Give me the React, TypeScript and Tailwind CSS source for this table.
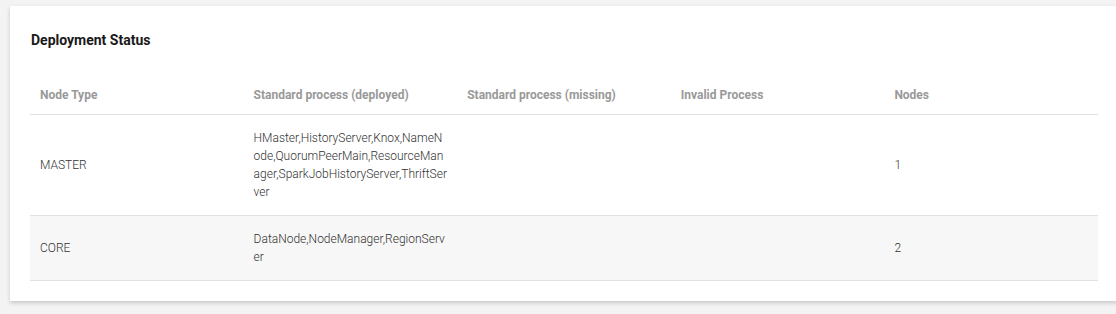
import React from "react";

type NodeRow = {
  type: string;
  deployed: string;
  missing: string;
  invalid: string;
  nodes: number;
};

const rows: NodeRow[] = [
  {
    type: "MASTER",
    deployed:
      "HMaster,HistoryServer,Knox,NameNode,QuorumPeerMain,ResourceManager,SparkJobHistoryServer,ThriftServer",
    missing: "",
    invalid: "",
    nodes: 1,
  },
  {
    type: "CORE",
    deployed: "DataNode,NodeManager,RegionServer",
    missing: "",
    invalid: "",
    nodes: 2,
  },
];

const columns = [
  "Node Type",
  "Standard process (deployed)",
  "Standard process (missing)",
  "Invalid Process",
  "Nodes",
];

const cell =
  "px-[10px] py-[14px] align-middle text-[12px] font-light leading-[18px] text-[#333333]";

export default function App() {
  return (
    <div
      className="min-h-[314px] w-[1116px] overflow-hidden bg-[#f3f3f3] pt-[6px]"
      style={{ fontFamily: "Roboto, 'Liberation Sans', sans-serif" }}
    >
      <div className="ml-[10px] w-[1108px] bg-white pl-[21px] pr-[19px] pt-[24px] pb-[20px] shadow-[0_2px_4px_rgba(0,0,0,0.18)]">
        <h3 className="text-[14px] font-bold leading-[20px] text-[#191919]">
          Deployment Status
        </h3>

        <table className="mt-[26px] -ml-px w-[1068px] table-fixed border-collapse">
          <thead>
            <tr className="border-b border-[#e2e2e2]">
              {columns.map((col) => (
                <th
                  key={col}
                  className="px-[10px] py-[10px] text-left text-[12px] font-bold leading-[18px] text-[#999999]"
                >
                  {col}
                </th>
              ))}
            </tr>
          </thead>
          <tbody>
            {rows.map((row, i) => (
              <tr
                key={row.type}
                className={`border-b border-[#e2e2e2] ${
                  i % 2 === 1 ? "bg-[#f7f7f7]" : "bg-white"
                }`}
              >
                <td className={cell}>{row.type}</td>
                <td className={`${cell} break-all`}>{row.deployed}</td>
                <td className={cell}>{row.missing}</td>
                <td className={cell}>{row.invalid}</td>
                <td className={cell}>{row.nodes}</td>
              </tr>
            ))}
          </tbody>
        </table>
      </div>
    </div>
  );
}
